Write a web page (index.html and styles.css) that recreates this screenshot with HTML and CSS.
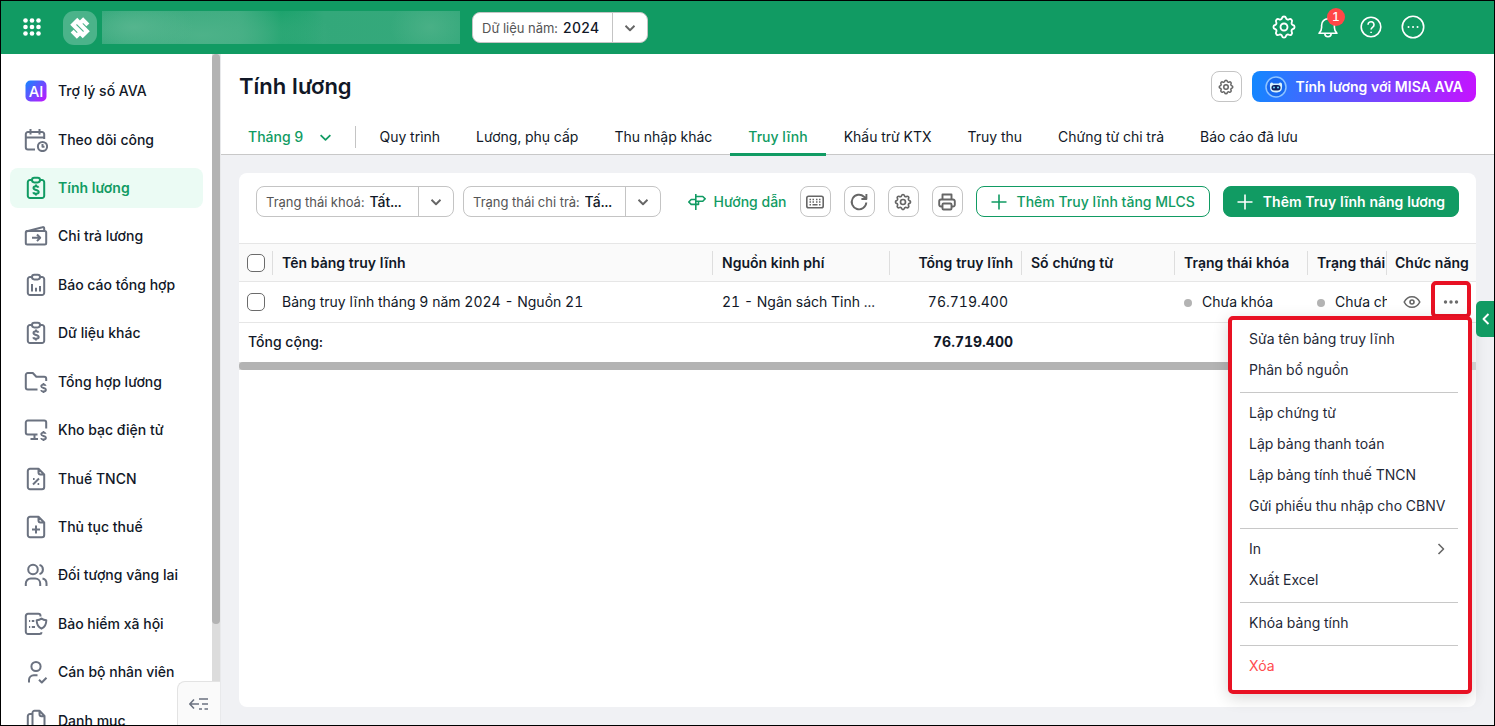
FILE: index.html
```html
<!DOCTYPE html>
<html lang="vi">
<head>
<meta charset="utf-8">
<meta name="viewport" content="width=device-width, initial-scale=1">
<title>Tính lương</title>
<link rel="stylesheet" href="styles.css">
</head>
<body>
<svg class="sprite" aria-hidden="true">
  <symbol id="chevron" viewBox="0 0 12 12"><path d="M1.500 3.800 6 8.200l4.500-4.400"/></symbol>
  <symbol id="plus" viewBox="0 0 16 16"><path d="M8 .5v15M.5 8h15"/></symbol>
  <symbol id="gear" viewBox="0 0 24 24">
    <path d="M10.300 4.300c.4-1.800 3-1.800 3.400 0a1.700 1.700 0 0 0 2.600 1.100c1.500-.9 3.300.8 2.400 2.400a1.700 1.700 0 0 0 1 2.500c1.800.4 1.800 3 0 3.400a1.700 1.700 0 0 0-1 2.600c.9 1.500-.9 3.300-2.400 2.400a1.700 1.700 0 0 0-2.600 1c-.4 1.800-3 1.800-3.400 0a1.700 1.700 0 0 0-2.600-1c-1.500.9-3.300-.9-2.400-2.400a1.700 1.700 0 0 0-1-2.600c-1.800-.4-1.800-3 0-3.400a1.700 1.700 0 0 0 1-2.500c-.9-1.600.9-3.300 2.400-2.400a1.700 1.700 0 0 0 2.600-1.100z"/>
    <circle cx="12" cy="12" r="3"/>
  </symbol>
  <symbol id="board" viewBox="0 0 24 24">
    <path d="M8 4H6a2.200 2.200 0 0 0-2.200 2.200v13.600A2.200 2.200 0 0 0 6 22h12a2.200 2.200 0 0 0 2.200-2.200V6.200A2.200 2.200 0 0 0 18 4h-2"/>
    <rect x="8" y="1.800" width="8" height="4.600" rx="2.300"/>
  </symbol>
  <symbol id="dollar" viewBox="0 0 8 12"><path d="M6.500 3.600C6.200 2.700 5.300 2.300 4 2.300c-1.500 0-2.500.6-2.500 1.800C1.500 6.700 6.700 5.300 6.700 8c0 1.200-1.100 1.800-2.700 1.800-1.500 0-2.500-.5-2.700-1.500M4 .6v1.700M4 9.800v1.700"/></symbol>
  <symbol id="doc" viewBox="0 0 24 24">
    <path d="M14.500 1.800H6a2.200 2.200 0 0 0-2.200 2.200v16A2.200 2.200 0 0 0 6 22.200h12a2.200 2.200 0 0 0 2.200-2.200V7.500zv3.700a2 2 0 0 0 2 2h3.700"/>
  </symbol>
</svg>

<header class="topbar">
  <button class="plain apps" aria-label="Ứng dụng">
    <svg width="18" height="18" viewBox="0 0 18 18" fill="#fff"><circle cx="2.500" cy="2.500" r="2.300"/><circle cx="9" cy="2.500" r="2.300"/><circle cx="15.500" cy="2.500" r="2.300"/><circle cx="2.500" cy="9" r="2.300"/><circle cx="9" cy="9" r="2.300"/><circle cx="15.500" cy="9" r="2.300"/><circle cx="2.500" cy="15.500" r="2.300"/><circle cx="9" cy="15.500" r="2.300"/><circle cx="15.500" cy="15.500" r="2.300"/></svg>
  </button>
  <a href="#" class="logo" aria-label="Trang chủ">
    <svg width="22" height="22" viewBox="0 0 21 21" fill="none" stroke="#fff" stroke-width="4"><path d="M9.300 2.200 4 7.500l7 7L7.500 18l-4.500-4.500M11.700 18.800 17 13.500l-7-7L13.500 3 18 7.500"/></svg>
  </a>
  <div class="org"></div>
  <label class="combo year"><span class="combo-label">Dữ liệu năm:</span>
    <select><option>2024</option></select>
    <span class="combo-arrow"><svg class="line" width="12" height="12"><use href="#chevron"/></svg></span>
  </label>
  <nav class="tools" aria-label="Công cụ">
    <button class="plain" aria-label="Thiết lập"><svg class="line" width="28" height="28"><use href="#gear"/></svg></button>
    <button class="plain bell" aria-label="Thông báo"><svg class="line" width="26" height="26" viewBox="0 0 26 26"><path d="M4 19.300h18c-2-1.700-2.600-3.300-2.600-5.800v-2.300a6.400 6.400 0 0 0-12.800 0v2.300c0 2.500-.6 4.100-2.600 5.800zM9.800 19.500a3.200 3.200 0 0 0 6.400 0M13 4.600V2.800"/></svg><span class="badge">1</span></button>
    <button class="plain" aria-label="Trợ giúp"><svg class="line" width="26" height="26" viewBox="0 0 26 26"><circle cx="13" cy="13" r="9.800"/><path d="M10 10.700a3 3 0 1 1 4.700 2.500c-1 .7-1.600 1.200-1.600 2.400M13.100 17.700v1.200"/></svg></button>
    <button class="plain" aria-label="Thêm"><svg class="line" width="24" height="24" viewBox="1 1 24 24"><circle cx="13" cy="13" r="10.700"/><path stroke-linecap="round" stroke-width="1.900" d="M8.500 13h.1M13 13h.1M17.500 13h.1"/></svg></button>
  </nav>
</header>

<div class="shell">
  <aside class="sidebar">
    <nav class="menu" aria-label="Menu chính">
      <a href="#"><svg width="24" height="24" viewBox="0 0 24 24"><defs><linearGradient id="ai" x1="0" y1="0" x2="1" y2="1"><stop offset="0" stop-color="#1188ff"/><stop offset=".5" stop-color="#6a4dff"/><stop offset="1" stop-color="#c612ff"/></linearGradient></defs><rect x="1.500" y="1.500" width="21" height="21" rx="5" fill="url(#ai)"/><text x="12" y="17.500" text-anchor="middle" class="ai-text">AI</text></svg>Trợ lý số AVA</a>
      <a href="#"><svg class="line" width="24" height="24" viewBox="0 0 24 24"><path d="M1.800 9.500h18.400M11 21.500H4a2.200 2.200 0 0 1-2.200-2.200V6.200A2.200 2.200 0 0 1 4 4h14a2.200 2.200 0 0 1 2.200 2.200V11M6.500 1v5.500M15.500 1v5.500"/><circle cx="18.500" cy="18.500" r="4.600"/><path d="M18.500 16v2.700h2"/></svg>Theo dõi công</a>
      <a href="#" class="active" aria-current="page"><svg class="line" width="24" height="24" viewBox="0 0 24 24"><use href="#board"/><use href="#dollar" x="8" y="8" width="8" height="12"/></svg>Tính lương</a>
      <a href="#"><svg class="line" width="24" height="24" viewBox="0 0 24 24"><rect x="1.800" y="7" width="20.400" height="13.500" rx="1.500"/><path d="M2 7.500 18.500 3.200c1-.3 1.700.3 1.700 1.300V7M8 13.800h8M13 10.500l3.200 3.300-3.200 3.300"/></svg>Chi trả lương</a>
      <a href="#"><svg class="line" width="24" height="24" viewBox="0 0 24 24"><use href="#board"/><path d="M8 11v7.500M12 14.800v3.700M16 13v5.500"/></svg>Báo cáo tổng hợp</a>
      <a href="#"><svg class="line" width="24" height="24" viewBox="0 0 24 24"><use href="#board"/><use href="#dollar" x="8" y="8" width="8" height="12"/></svg>Dữ liệu khác</a>
      <a href="#"><svg class="line" width="24" height="24" viewBox="0 0 24 24"><path d="M13.500 19.500H3.800a2 2 0 0 1-2-2V5a2 2 0 0 1 2-2h5l3.500 3.800h7.900a2 2 0 0 1 2 2V11"/><use href="#dollar" x="15.500" y="12.500" width="8" height="11"/></svg>Tổng hợp lương</a>
      <a href="#"><svg class="line" width="24" height="24" viewBox="0 0 24 24"><path d="M13.500 16.500H3.800a2 2 0 0 1-2-2V4.500a2 2 0 0 1 2-2h16.400a2 2 0 0 1 2 2V10.500M6.500 21h7.500M10.500 16.500V21"/><use href="#dollar" x="15.500" y="12.500" width="8" height="11"/></svg>Kho bạc điện tử</a>
      <a href="#"><svg class="line" width="24" height="24" viewBox="0 0 24 24"><use href="#doc"/><path d="m9 17.500 6-6M9 12h1.600M13.600 17h1.600"/></svg>Thuế TNCN</a>
      <a href="#"><svg class="line" width="24" height="24" viewBox="0 0 24 24"><use href="#doc"/><path d="M12 10.500v8M8 14.500h8"/></svg>Thủ tục thuế</a>
      <a href="#"><svg class="line" width="24" height="24" viewBox="0 0 24 24"><circle cx="9" cy="6.500" r="4.800"/><path d="M1.800 23v-2.500a5 5 0 0 1 5-5h4.400a5 5 0 0 1 5 5V23M15.500 1.900a4.800 4.800 0 0 1 0 9.200M18.500 15.600a5 5 0 0 1 4 4.900V23"/></svg>Đối tượng vãng lai</a>
      <a href="#"><svg class="line" width="24" height="24" viewBox="0 0 24 24"><path d="M16.500 4.500V4a2.200 2.200 0 0 0-2.200-2.200H4A2.200 2.200 0 0 0 1.800 4v15.800A2.200 2.200 0 0 0 4 22h11.500c1.200 0 2-.6 2.200-1.700M5 9h1.200M7.800 9h2.500M5 15h1.200M7.800 15h3.200M17.500 6.500c1.500 1.300 3 1.700 4.800 1.800 0 4.200-1.200 6.800-4.800 8.400-3.600-1.600-4.800-4.200-4.800-8.400 1.800-.1 3.300-.5 4.800-1.800z"/></svg>Bảo hiểm xã hội</a>
      <a href="#"><svg class="line" width="24" height="24" viewBox="0 0 24 24"><circle cx="12" cy="6.500" r="4.600"/><path d="M5 22.500V20a4.800 4.800 0 0 1 4.800-4.800h3.700M15 19.800l2.800 2.700 4.700-4.700"/></svg>Cán bộ nhân viên</a>
      <a href="#"><svg class="line" width="24" height="24" viewBox="0 0 24 24"><path d="M15.500 1.800h-5A2 2 0 0 0 8.500 3.800v12.400a2 2 0 0 0 2 2h8a2 2 0 0 0 2-2V7zv3.400a2 2 0 0 0 2 2h3M8.500 5H6a2.200 2.200 0 0 0-2.200 2.200v12.600A2.200 2.200 0 0 0 6 22h8"/></svg>Danh mục</a>
    </nav>
    <div class="scroll-y"><div class="thumb-y"></div></div>
    <button class="collapse" aria-label="Thu gọn"><svg class="line" width="20" height="16" viewBox="0 0 20 16"><path d="M1 8h9M5 3.500.800 8 5 12.500M10 3h9M13 8h6M10 13h3M15.500 13H19"/></svg></button>
  </aside>

  <main class="content">
    <div class="page-head">
      <h1>Tính lương</h1>
      <button class="icon-btn" aria-label="Tuỳ chỉnh"><svg class="line thin" width="18" height="18"><use href="#gear"/></svg></button>
      <button class="ava"><svg width="24" height="24" viewBox="0 0 24 24"><circle cx="12" cy="12" r="10" fill="#1769f0" stroke="#8fc4ff" stroke-width="1.500"/><path d="M6.300 8.300c.8-1.200 2-1.200 3 .2h5.400c1-1.400 2.200-1.400 3-.2.500 1 .5 3 .2 5.200-.5 3-3 4-5.900 4s-5.400-1-5.900-4c-.3-2.200-.3-4.200.2-5.200z" fill="#d8f2ff"/><rect x="7.500" y="10" width="9" height="5.400" rx="2.600" fill="#10205e"/><circle cx="10" cy="12.500" r="1" fill="#6fe0ff"/><circle cx="14" cy="12.500" r="1" fill="#6fe0ff"/></svg>Tính lương với MISA AVA</button>
    </div>
    <nav class="tabs" aria-label="Phân hệ">
      <button class="month">Tháng 9<svg class="line" width="13" height="13"><use href="#chevron"/></svg></button>
      <a href="#">Quy trình</a>
      <a href="#">Lương, phụ cấp</a>
      <a href="#">Thu nhập khác</a>
      <a href="#" class="active">Truy lĩnh</a>
      <a href="#">Khấu trừ KTX</a>
      <a href="#">Truy thu</a>
      <a href="#">Chứng từ chi trả</a>
      <a href="#">Báo cáo đã lưu</a>
    </nav>

    <section class="card">
      <div class="toolbar">
        <label class="combo filter"><span class="combo-label">Trạng thái khoá:</span>
          <select><option>Tất...</option></select>
          <span class="combo-arrow"><svg class="line" width="12" height="12"><use href="#chevron"/></svg></span>
        </label>
        <label class="combo filter"><span class="combo-label">Trạng thái chi trả:</span>
          <select><option>Tấ...</option></select>
          <span class="combo-arrow"><svg class="line" width="12" height="12"><use href="#chevron"/></svg></span>
        </label>
        <div class="actions">
          <a href="#" class="guide"><svg class="line" width="18" height="18" viewBox="0 0 18 18"><path d="M7.800 1v16M7.800 3.500h7l2.400 2.300-2.400 2.400h-7M7.800 6.500H3.200L.800 9l2.400 2.400h7.300V8.200"/></svg>Hướng dẫn</a>
          <button class="icon-btn" aria-label="Phím tắt"><svg class="line" width="20" height="20" viewBox="0 0 20 20"><rect x="1.800" y="4.300" width="16.400" height="11.400" rx="1.800"/><path d="M4.500 7.500H6M7.500 7.500H9M11 7.500h1.500M14 7.500h1.500M4.500 10H6M7.500 10H9M11 10h1.500M14 10h1.500M4.500 12.700H6M7.500 12.700h5M14 12.700h1.500"/></svg></button>
          <button class="icon-btn" aria-label="Tải lại"><svg class="line bold" width="20" height="20" viewBox="0 0 20 20"><path d="M17.300 10.500A7.300 7.300 0 1 1 15 4.700l2.300 2.100M17.400 2v5h-5"/></svg></button>
          <button class="icon-btn" aria-label="Thiết lập bảng"><svg class="line thin" width="20" height="20"><use href="#gear"/></svg></button>
          <button class="icon-btn" aria-label="In"><svg class="line bold" width="20" height="20" viewBox="0 0 20 20"><path d="M5.500 7.500V2.500h9v5M5.500 14.500H4A1.800 1.800 0 0 1 2.200 12.700V9.300A1.800 1.800 0 0 1 4 7.500h12a1.800 1.800 0 0 1 1.800 1.800v3.400a1.800 1.800 0 0 1-1.800 1.800h-1.500"/><rect x="5.500" y="11.500" width="9" height="6" rx="1"/></svg></button>
          <button class="btn outline"><svg class="line" width="16" height="16"><use href="#plus"/></svg>Thêm Truy lĩnh tăng MLCS</button>
          <button class="btn solid"><svg class="line" width="16" height="16"><use href="#plus"/></svg>Thêm Truy lĩnh nâng lương</button>
        </div>
      </div>

      <table class="grid">
        <colgroup><col class="c-check"><col><col class="c-source"><col class="c-total"><col class="c-voucher"><col class="c-lock"><col class="c-pay"><col class="c-fn"></colgroup>
        <thead>
          <tr><th class="check"><input type="checkbox" aria-label="Chọn tất cả"></th><th>Tên bảng truy lĩnh</th><th>Nguồn kinh phí</th><th class="num">Tổng truy lĩnh</th><th>Số chứng từ</th><th>Trạng thái khóa</th><th>Trạng thái</th><th class="fn">Chức năng</th></tr>
        </thead>
        <tbody>
          <tr><td class="check"><input type="checkbox" aria-label="Chọn dòng"></td><td>Bảng truy lĩnh tháng 9 năm 2024 - Nguồn 21</td><td>21 - Ngân sách Tỉnh ...</td><td class="num value">76.719.400</td><td></td><td><span class="dot"></span>Chưa khóa</td><td><span class="dot"></span>Chưa chi</td>
            <td class="fn"><div class="row-tools"><button class="plain" aria-label="Xem"><svg class="line" width="18" height="14" viewBox="0 0 18 14"><path d="M1.200 7C3 3.500 5.600 1.700 9 1.700S15 3.500 16.800 7C15 10.500 12.400 12.300 9 12.300S3 10.500 1.200 7z"/><circle cx="9" cy="7" r="2"/></svg></button><button class="plain" aria-label="Thao tác khác"><svg width="16" height="6" viewBox="0 0 16 6" fill="#6b6b6b"><circle cx="2.500" cy="3" r="1.700"/><circle cx="8" cy="3" r="1.700"/><circle cx="13.500" cy="3" r="1.700"/></svg></button></div></td></tr>
        </tbody>
        <tfoot>
          <tr><td colspan="3" class="sum">Tổng cộng:</td><td class="num">76.719.400</td><td></td><td></td><td></td><td></td></tr>
        </tfoot>
      </table>
      <div class="scroll-x"><div class="thumb-x"></div></div>

      <div class="mark"></div>
      <div class="popup" role="menu">
        <button role="menuitem">Sửa tên bảng truy lĩnh</button>
        <button role="menuitem">Phân bổ nguồn</button>
        <hr>
        <button role="menuitem">Lập chứng từ</button>
        <button role="menuitem">Lập bảng thanh toán</button>
        <button role="menuitem">Lập bảng tính thuế TNCN</button>
        <button role="menuitem">Gửi phiếu thu nhập cho CBNV</button>
        <hr>
        <button role="menuitem">In<svg class="line" width="12" height="12" viewBox="0 0 12 12"><path d="M3.500 1 8.500 6l-5 5"/></svg></button>
        <button role="menuitem">Xuất Excel</button>
        <hr>
        <button role="menuitem">Khóa bảng tính</button>
        <hr>
        <button role="menuitem" class="danger">Xóa</button>
      </div>
    </section>
    <button class="drawer" aria-label="Mở bảng bên"><svg class="line bold" width="12" height="14" viewBox="0 0 12 14"><path d="M9.500 2 4.500 7l5 5"/></svg></button>
  </main>
</div>
</body>
</html>
```
FILE: styles.css
```css
* { box-sizing: border-box; }

body {
  margin: 0;
  height: 100vh;
  display: flex;
  flex-direction: column;
  overflow: hidden;
  border: 1px solid #000;
  background: #fff;
  color: #111827;
  font: 14px/20px Inter, "Noto Sans", sans-serif;
  font-variant-numeric: tabular-nums;
}

button, select { font: inherit; color: inherit; }
button { cursor: pointer; }
a { color: inherit; text-decoration: none; }
svg { flex: none; display: block; }

.sprite { position: absolute; width: 0; height: 0; }
.line { fill: none; stroke: currentColor; stroke-width: 1.6; stroke-linejoin: round; }
.plain { padding: 0; border: 0; background: none; display: flex; }

/* Top bar */
.topbar {
  flex: none;
  display: flex;
  align-items: center;
  height: 53px;
  padding: 0 69px 0 22px;
  background: #119b63;
  color: #fff;
}
.apps { padding-bottom: 1px; }
.logo {
  display: grid;
  place-items: center;
  width: 34px;
  height: 34px;
  margin-left: 22px;
  border-radius: 11px;
  background: #4bb38a;
}
.org {
  width: 358px;
  height: 33px;
  margin: 0 12px 0 5px;
  background:
    radial-gradient(60px 26px at 32px 16px, #55b58e, transparent),
    radial-gradient(130px 40px at 100px 24px, #4db289, transparent),
    radial-gradient(40px 30px at 328px 16px, #49b086, transparent),
    linear-gradient(90deg, #2fa678 0, #3cab7f 38%, #15a068 50%, #33a87a 62%, #36a97c 100%);
}

.combo {
  display: flex;
  align-items: center;
  height: 31px;
  overflow: hidden;
  border: 1px solid #c4c4c4;
  border-radius: 8px;
  background: #fff;
  color: #111827;
}
.combo-label { padding-left: 9px; color: #555; font-size: 13px; white-space: nowrap; }
.combo select {
  flex: 1;
  min-width: 0;
  margin-left: 5px;
  padding: 0;
  border: 0;
  background: none;
  appearance: none;
  font-weight: 500;
}
.combo-arrow {
  flex: none;
  display: grid;
  place-items: center;
  align-self: stretch;
  width: 35px;
  border-left: 1px solid #c4c4c4;
  color: #666;
}
.combo-arrow .line { stroke-width: 1.9; }
.year { width: 176px; }
.filter { width: 198px; }

.tools { display: flex; align-items: center; gap: 17px; margin-left: auto; padding-bottom: 2px; }
.bell { position: relative; }
.badge {
  position: absolute;
  top: -6px;
  right: -4px;
  width: 18px;
  height: 18px;
  border-radius: 9px;
  background: #ff4747;
  font-size: 12px;
  font-weight: 500;
  line-height: 18px;
  text-align: center;
}

/* Sidebar */
.shell { flex: 1; display: flex; min-height: 0; }
.sidebar {
  position: relative;
  flex: none;
  display: flex;
  width: 220px;
  overflow: hidden;
  border-right: 1px solid #e8e9eb;
}
.menu {
  flex: 1;
  display: grid;
  grid-auto-rows: 1fr;
  align-items: center;
  height: 678px;
  margin-top: 13px;
  padding: 0 9px;
  font-weight: 500;
}
.menu a {
  display: flex;
  align-items: center;
  gap: 10px;
  height: 40px;
  padding-left: 14px;
  border-radius: 8px;
}
.menu .line { color: #6b7280; stroke-width: 2; }
.menu .active { background: #ebfbf4; color: #119b63; font-weight: 600; }
.menu .active .line { color: #119b63; }
.ai-text { fill: #fff; font-size: 15px; font-weight: 500; }
.scroll-y { width: 8px; background: #dcdcdc; }
.thumb-y { height: 85%; border-radius: 4px; background: #b3b3b3; }
.collapse {
  position: absolute;
  right: 0;
  bottom: 0;
  display: grid;
  place-items: center;
  width: 43px;
  height: 44px;
  padding: 0;
  border: 1px solid #e3e3e3;
  border-width: 1px 0 0 1px;
  border-radius: 8px 0 0 0;
  background: #fafafa;
  color: #6b7280;
}

/* Page heading and tabs */
.content {
  position: relative;
  flex: 1;
  display: flex;
  flex-direction: column;
  min-width: 0;
  background: #f0f1f4;
}
.page-head {
  display: flex;
  align-items: center;
  gap: 10px;
  padding: 17px 18px 16px;
  background: #fff;
}
.page-head h1 { margin: 0 auto 2px 0; font-size: 22px; font-weight: 600; line-height: 28px; }
.icon-btn {
  display: grid;
  place-items: center;
  width: 31px;
  height: 31px;
  padding: 0;
  border: 1px solid #c4c4c4;
  border-radius: 8px;
  background: #fff;
  color: #666;
}
.thin { stroke-width: 2; }
.bold { stroke-width: 1.9; }
.ava {
  display: flex;
  align-items: center;
  gap: 8px;
  height: 31px;
  padding: 0 13px 0 12px;
  border: 0;
  border-radius: 8px;
  background: linear-gradient(100deg, #1188ff, #c612ff);
  color: #fff;
  font-weight: 600;
  white-space: nowrap;
}
.tabs {
  display: flex;
  height: 37px;
  padding-left: 27px;
  border-bottom: 1px solid #c8c8c8;
  background: #fff;
  white-space: nowrap;
}
.tabs a { height: 38px; padding: 9px 18px 0; }
.tabs .active { border-bottom: 3px solid #119b63; color: #119b63; font-weight: 500; }
.month {
  display: flex;
  align-items: center;
  gap: 16px;
  height: 22px;
  margin: 8px 5px 0 0;
  padding: 0 23px 0 0;
  border: 0;
  border-right: 1px solid #c4c4c4;
  background: none;
  color: #119b63;
  font-weight: 500;
}

/* Card */
.card {
  position: relative;
  flex: 1;
  margin: 18px;
  border-radius: 8px;
  background: #fff;
}
.toolbar {
  display: flex;
  gap: 9px;
  padding: 13px 17px 26px;
}
.actions { display: flex; gap: 13px; margin-left: auto; white-space: nowrap; }
.guide { display: flex; align-items: center; gap: 8px; color: #119b63; font-weight: 500; }
.btn {
  display: flex;
  align-items: center;
  gap: 10px;
  height: 31px;
  padding: 0 13px;
  border: 1px solid #119b63;
  border-radius: 8px;
  font-weight: 500;
}
.outline { padding: 0 14px; background: #fff; color: #119b63; }
.solid { background: #119b63; color: #fff; font-weight: 600; }

.grid { width: 100%; table-layout: fixed; border-collapse: collapse; white-space: nowrap; }
.grid th, .grid td { overflow: hidden; padding: 0 0 0 9px; text-align: left; }
.grid th {
  height: 38px;
  background: #fafafa linear-gradient(#dedede, #dedede) right center / 1px 24px no-repeat;
  font-weight: 600;
}
.grid th:last-child { background-image: none; }
.grid thead tr { border-top: 1px solid #e6e6e6; border-bottom: 1px solid #e6e6e6; }
.grid tbody tr { height: 41px; border-bottom: 1px solid #e6e6e6; }
.grid tfoot td { height: 39px; }
.grid .check { padding-left: 8px; }
.grid .num { padding-right: 9px; text-align: right; }
.grid .value { padding-right: 14px; }
.grid .fn { padding-left: 8px; }
.grid tfoot .num { font-weight: 700; }
.grid .sum { font-weight: 500; }
.c-check { width: 34px; }
.c-source { width: 177px; }
.c-total { width: 132px; }
.c-voucher { width: 153px; }
.c-lock { width: 133px; }
.c-pay { width: 79px; }
.c-fn { width: 89px; }
.grid input {
  display: block;
  width: 18px;
  height: 18px;
  margin: 0;
  border: 1px solid #6b6b6b;
  border-radius: 5px;
  background: #fff;
  appearance: none;
}
.dot {
  display: inline-block;
  width: 8px;
  height: 8px;
  margin-right: 10px;
  border-radius: 4px;
  background: #b3b3b3;
}
.row-tools { display: flex; align-items: center; gap: 22px; padding-left: 8px; color: #666; }
.scroll-x { height: 8px; background: #dcdcdc; }
.thumb-x { width: 99%; height: 8px; border-radius: 4px; background: #b3b3b3; }

/* Row action menu */
.mark {
  position: absolute;
  top: 108px;
  right: 5px;
  width: 40px;
  height: 37px;
  border: 4px solid #e81123;
  border-radius: 5px;
}
.popup {
  position: absolute;
  top: 143px;
  right: 4px;
  width: 244px;
  padding: 3px 10px 9px 8px;
  border: 4px solid #e81123;
  border-radius: 5px;
  background: #fff;
  box-shadow: 0 4px 16px rgba(0, 0, 0, .16);
  white-space: nowrap;
}
.popup button {
  display: flex;
  align-items: center;
  justify-content: space-between;
  width: 100%;
  height: 31px;
  padding: 0 11px 0 9px;
  border: 0;
  background: none;
  color: #1f2937;
}
.popup svg { color: #666; }
.popup hr { height: 1px; margin: 7px 0 4px; border: 0; background: #c8c8c8; }
.popup .danger { color: #ff4d4f; }

.drawer {
  position: absolute;
  top: 247px;
  right: 0;
  display: grid;
  place-items: center;
  width: 18px;
  height: 36px;
  padding: 0;
  border: 0;
  border-radius: 5px 0 0 5px;
  background: #119b63;
  color: #fff;
}
```
